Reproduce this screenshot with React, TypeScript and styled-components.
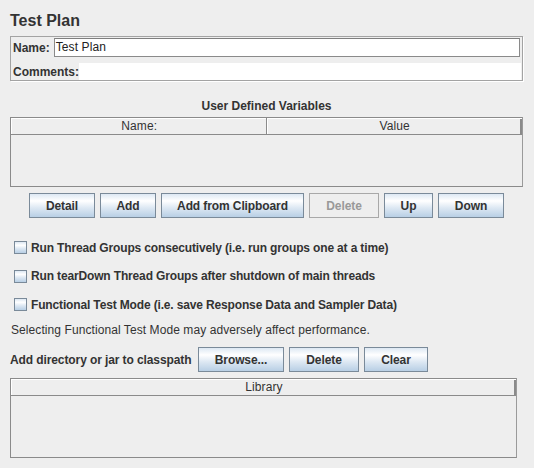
import React from 'react';
import styled, { createGlobalStyle } from 'styled-components';

const Global = createGlobalStyle`
  html, body { margin: 0; padding: 0; background: #eeeeee; }
  body {
    font-family: "Liberation Sans", Arial, sans-serif;
    font-size: 12px;
    color: #333333;
  }
`;

const Page = styled.div`
  width: 534px;
  height: 468px;
  box-sizing: border-box;
  padding: 11px 11px 0 10px;
  display: flex;
  flex-direction: column;
  background: #eeeeee;
  overflow: hidden;
`;

const Title = styled.h1`
  margin: 0 0 5px 0;
  font-size: 16px;
  line-height: 20px;
  font-weight: bold;
  color: #333333;
`;

const NamePanel = styled.div`
  border: 1px solid #a3a3a3;
  box-shadow: 1px 1px 0 #ffffff;
  padding: 1px 1px 0 1px;
  display: flex;
  flex-direction: column;
  gap: 6px;
`;

const FieldRow = styled.div<{ $h: number }>`
  display: flex;
  align-items: center;
  height: ${(p) => p.$h}px;
`;

const FieldLabel = styled.label`
  font-weight: bold;
  line-height: 14px;
  padding-left: 1px;
  white-space: nowrap;
`;

const TextField = styled.div`
  flex: 1;
  height: 19px;
  box-sizing: border-box;
  margin: 0 1px 0 4px;
  background: #ffffff;
  border: 1px solid #8a8a8a;
  border-top-color: #7f7f7f;
  padding-left: 1px;
  line-height: 17px;
  font-size: 12px;
  letter-spacing: 0.1px;
  color: #222;
`;

const TextArea = styled.div`
  flex: 1;
  align-self: stretch;
  background: #ffffff;
`;

const SectionLabel = styled.div`
  margin-top: 18px;
  text-align: center;
  font-weight: bold;
  line-height: 14px;
`;

const Table = styled.div<{ $h: number; $mt: number; $mr?: number }>`
  margin-top: ${(p) => p.$mt}px;
  margin-right: ${(p) => p.$mr ?? 0}px;
  height: ${(p) => p.$h}px;
  box-sizing: border-box;
  border: 1px solid #8a8a8a;
  border-right-color: #9a9a9a;
  display: flex;
  flex-direction: column;
  background: #eeeeee;
`;

const HeaderRow = styled.div`
  display: flex;
  height: 17px;
  box-sizing: border-box;
  border-bottom: 1px solid #8a8a8a;
  box-shadow: inset -2px 0 0 #8a8a8a;
`;

const HeaderCell = styled.div`
  flex: 1;
  text-align: center;
  line-height: 15px;
  letter-spacing: 0.1px;
  border-top: 1px solid #ffffff;
  border-left: 1px solid #ffffff;
  & + & {
    box-shadow: -1px 0 0 #8a8a8a;
  }
`;

const ButtonRow = styled.div<{ $mt: number }>`
  display: flex;
  justify-content: center;
  gap: 5px;
  margin-top: ${(p) => p.$mt}px;
`;

const Button = styled.button<{ $w: number }>`
  width: ${(p) => p.$w}px;
  height: 25px;
  box-sizing: border-box;
  padding: 1px 0 0 0;
  border: 1px solid #7a8a99;
  border-radius: 0;
  background: linear-gradient(
    to bottom,
    #dde8f3 0%,
    #ffffff 30%,
    #dde8f3 60%,
    #b8cfe5 100%
  );
  font-family: "Liberation Sans", Arial, sans-serif;
  font-size: 12px;
  font-weight: bold;
  letter-spacing: -0.1px;
  color: #333333;
  flex: none;

  &:disabled {
    background: #eeeeee;
    border-color: #a8a8a8;
    color: #999999;
  }
`;

const Options = styled.div`
  margin-top: 21px;
  display: flex;
  flex-direction: column;
  gap: 11.5px;
  padding-left: 4px;
`;

const CheckRow = styled.label`
  display: flex;
  align-items: center;
  gap: 4px;
  height: 17px;
  font-weight: bold;
  letter-spacing: -0.15px;
`;

const CheckBox = styled.span`
  width: 13px;
  height: 13px;
  box-sizing: border-box;
  border: 1px solid #7a8a99;
  background: linear-gradient(
    to bottom,
    #dde8f3 0%,
    #ffffff 30%,
    #dde8f3 60%,
    #b8cfe5 100%
  );
  flex: none;
`;

const Note = styled.div`
  margin-top: 9.5px;
  padding-left: 1px;
  line-height: 14px;
  letter-spacing: 0.08px;
`;

const ClasspathRow = styled.div`
  display: flex;
  align-items: center;
  gap: 5px;
  margin-top: 10.5px;
`;

const ClasspathLabel = styled.span`
  font-weight: bold;
  margin-right: 2px;
  width: 181px;
  white-space: nowrap;
  letter-spacing: -0.1px;
`;

export default function App() {
  return (
    <>
      <Global />
      <Page>
        <Title>Test Plan</Title>
        <NamePanel>
          <FieldRow $h={19}>
            <FieldLabel>Name:</FieldLabel>
            <TextField>Test Plan</TextField>
          </FieldRow>
          <FieldRow $h={17}>
            <FieldLabel>Comments:</FieldLabel>
            <TextArea />
          </FieldRow>
        </NamePanel>

        <SectionLabel>User Defined Variables</SectionLabel>
        <Table $h={70} $mt={4}>
          <HeaderRow>
            <HeaderCell>Name:</HeaderCell>
            <HeaderCell>Value</HeaderCell>
          </HeaderRow>
        </Table>

        <ButtonRow $mt={6}>
          <Button $w={66}>Detail</Button>
          <Button $w={56}>Add</Button>
          <Button $w={143}>Add from Clipboard</Button>
          <Button $w={70} disabled>
            Delete
          </Button>
          <Button $w={49}>Up</Button>
          <Button $w={66}>Down</Button>
        </ButtonRow>

        <Options>
          <CheckRow>
            <CheckBox />
            Run Thread Groups consecutively (i.e. run groups one at a time)
          </CheckRow>
          <CheckRow>
            <CheckBox />
            Run tearDown Thread Groups after shutdown of main threads
          </CheckRow>
          <CheckRow>
            <CheckBox />
            Functional Test Mode (i.e. save Response Data and Sampler Data)
          </CheckRow>
        </Options>

        <Note>Selecting Functional Test Mode may adversely affect performance.</Note>

        <ClasspathRow>
          <ClasspathLabel>Add directory or jar to classpath</ClasspathLabel>
          <Button $w={86}>Browse...</Button>
          <Button $w={70}>Delete</Button>
          <Button $w={64}>Clear</Button>
        </ClasspathRow>

        <Table $h={80} $mt={6} $mr={6}>
          <HeaderRow>
            <HeaderCell>Library</HeaderCell>
          </HeaderRow>
        </Table>
      </Page>
    </>
  );
}
